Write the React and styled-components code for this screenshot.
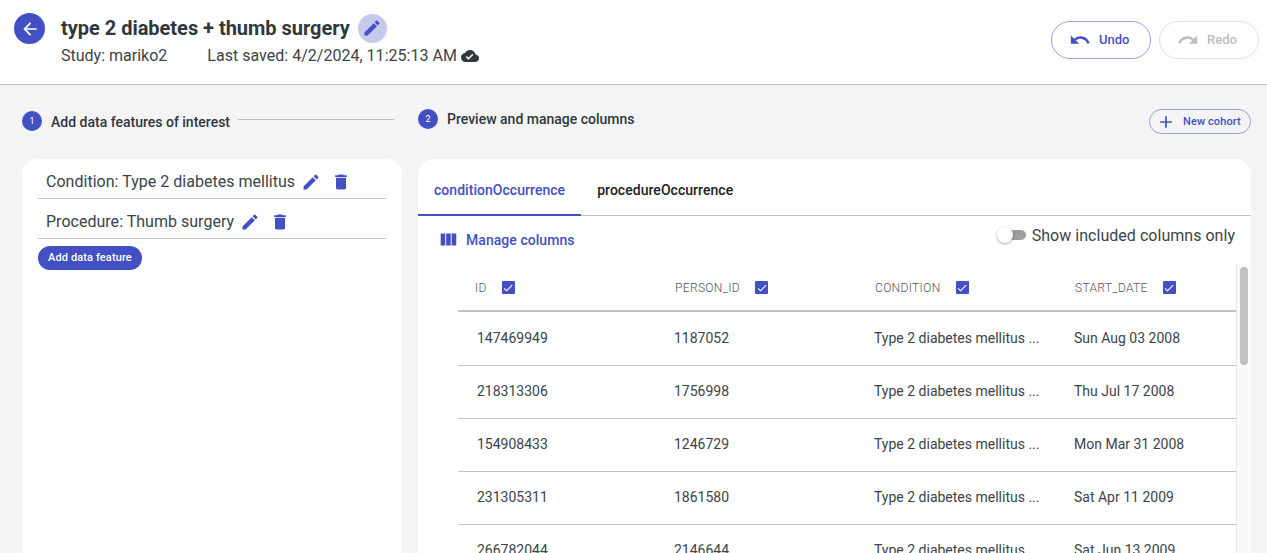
import React from "react";
import styled, { createGlobalStyle } from "styled-components";

const BLUE = "#4350c4";
const INK = "#2f383c";

const GlobalStyle = createGlobalStyle`
  html, body {
    margin: 0;
    height: 100%;
    overflow: hidden;
    background: #f4f4f4;
    font-family: Roboto, "Liberation Sans", sans-serif;
    color: ${INK};
  }
  * { box-sizing: border-box; }
`;

const icons = {
  back: "M20 11H7.83l5.59-5.59L12 4l-8 8 8 8 1.41-1.41L7.83 13H20v-2z",
  edit: "M3 17.25V21h3.75L17.81 9.94l-3.75-3.75L3 17.25zM20.71 7.04c.39-.39.39-1.02 0-1.41l-2.34-2.34a.9959.9959 0 0 0-1.41 0l-1.83 1.83 3.75 3.75 1.83-1.83z",
  trash: "M6 19c0 1.1.9 2 2 2h8c1.1 0 2-.9 2-2V7H6v12zM19 4h-3.5l-1-1h-5l-1 1H5v2h14V4z",
  undo: "M12.5 8c-2.65 0-5.05.99-6.9 2.6L2 7v9h9l-3.62-3.62c1.39-1.16 3.16-1.88 5.12-1.88 3.54 0 6.55 2.31 7.6 5.5l2.37-.78C21.08 11.03 17.15 8 12.5 8z",
  redo: "M18.4 10.6C16.55 8.99 14.15 8 11.5 8c-4.65 0-8.58 3.03-9.96 7.22L3.9 16c1.05-3.19 4.05-5.5 7.6-5.5 1.95 0 3.73.72 5.12 1.88L13 16h9V7l-3.6 3.6z",
  add: "M19 13h-6v6h-2v-6H5v-2h6V5h2v6h6v2z",
  columns: "M10 18h5V5h-5v13zm-6 0h5V5H4v13zM16 5v13h5V5h-5z",
  cloud: "M19.35 10.04C18.67 6.59 15.64 4 12 4 9.11 4 6.6 5.64 5.35 8.04 2.34 8.36 0 10.91 0 14c0 3.31 2.69 6 6 6h13c2.76 0 5-2.24 5-5 0-2.64-2.05-4.78-4.65-4.96zM10 17l-3.5-3.5 1.41-1.41L10 14.17 15.18 9l1.41 1.41L10 17z",
  check: "M9 16.17 4.83 12l-1.42 1.41L9 19 21 7l-1.41-1.41z",
};

const Icon = ({ name, size = 20, color = BLUE }) => (
  <svg width={size} height={size} viewBox="0 0 24 24" fill={color} style={{ flex: "none", display: "block" }}>
    <path d={icons[name]} />
  </svg>
);

const rows = [
  ["147469949", "1187052", "Type 2 diabetes mellitus ...", "Sun Aug 03 2008"],
  ["218313306", "1756998", "Type 2 diabetes mellitus ...", "Thu Jul 17 2008"],
  ["154908433", "1246729", "Type 2 diabetes mellitus ...", "Mon Mar 31 2008"],
  ["231305311", "1861580", "Type 2 diabetes mellitus ...", "Sat Apr 11 2009"],
  ["266782044", "2146644", "Type 2 diabetes mellitus ...", "Sat Jun 13 2009"],
];

const columns = ["ID", "PERSON_ID", "CONDITION", "START_DATE"];

const App = () => {
  return (
    <Page>
      <GlobalStyle />
      <Header>
        <BackButton>
          <Icon name="back" size={20} color="#fff" />
        </BackButton>
        <TitleBox>
          <TitleRow>
            <Title>type 2 diabetes + thumb surgery</Title>
            <EditCircle>
              <Icon name="edit" size={20} />
            </EditCircle>
          </TitleRow>
          <MetaRow>
            <span>Study: mariko2</span>
            <SavedText>
              Last saved: 4/2/2024, 11:25:13 AM
              <Icon name="cloud" size={18} color={INK} />
            </SavedText>
          </MetaRow>
        </TitleBox>
        <HeaderActions>
          <PillButton>
            <Icon name="undo" size={22} />
            Undo
          </PillButton>
          <PillButton disabled>
            <Icon name="redo" size={22} color="#bdbdbd" />
            Redo
          </PillButton>
        </HeaderActions>
      </Header>

      <Main>
        <LeftColumn>
          <LeftStep>
            <StepNumber>1</StepNumber>
            <StepLabel offset={1}>Add data features of interest</StepLabel>
            <StepLine />
          </LeftStep>
          <Panel>
            <FeatureList>
              <FeatureRow>
                Condition: Type 2 diabetes mellitus
                <Icon name="edit" size={20} />
                <TrashSlot>
                  <Icon name="trash" size={20} />
                </TrashSlot>
              </FeatureRow>
              <FeatureRow>
                Procedure: Thumb surgery
                <Icon name="edit" size={20} />
                <TrashSlot>
                  <Icon name="trash" size={20} />
                </TrashSlot>
              </FeatureRow>
              <AddButton>Add data feature</AddButton>
            </FeatureList>
          </Panel>
        </LeftColumn>

        <RightColumn>
          <RightStep>
            <StepNumber>2</StepNumber>
            <StepLabel offset={0}>Preview and manage columns</StepLabel>
            <NewCohort>
              <Icon name="add" size={20} />
              New cohort
            </NewCohort>
          </RightStep>
          <Panel>
            <Tabs>
              <Tab active>conditionOccurrence</Tab>
              <Tab>procedureOccurrence</Tab>
            </Tabs>
            <Toolbar>
              <ManageColumns>
                <Icon name="columns" size={22} />
                Manage columns
              </ManageColumns>
              <ToggleLabel>
                <Switch>
                  <SwitchThumb />
                </Switch>
                Show included columns only
              </ToggleLabel>
            </Toolbar>
            <TableArea>
              <Table>
                <HeadRow>
                  {columns.map((name) => (
                    <HeadCell key={name}>
                      {name}
                      <CheckBox>
                        <Icon name="check" size={12} color="#fff" />
                      </CheckBox>
                    </HeadCell>
                  ))}
                </HeadRow>
                <TableBody>
                  {rows.map((row) => (
                    <BodyRow key={row[0]}>
                      {row.map((value, i) => (
                        <BodyCell key={i} first={i === 0}>
                          {value}
                        </BodyCell>
                      ))}
                    </BodyRow>
                  ))}
                </TableBody>
              </Table>
              <ScrollTrack>
                <ScrollThumb />
              </ScrollTrack>
            </TableArea>
          </Panel>
        </RightColumn>
      </Main>
    </Page>
  );
};

export default App;

const Page = styled.div`
  height: 100vh;
  overflow: hidden;
  display: flex;
  flex-direction: column;
`;

const Header = styled.header`
  height: 85px;
  flex: none;
  display: flex;
  align-items: flex-start;
  background: #fff;
  border-bottom: 1px solid #bfc2c7;
  padding: 13px 8px 0 14px;
`;

const BackButton = styled.div`
  width: 31px;
  height: 31px;
  border-radius: 50%;
  background: ${BLUE};
  display: flex;
  align-items: center;
  justify-content: center;
`;

const TitleBox = styled.div`
  margin-left: 16px;
`;

const TitleRow = styled.div`
  display: flex;
  align-items: center;
  gap: 8px;
  height: 30px;
`;

const Title = styled.h1`
  margin: 0;
  font-size: 20px;
  font-weight: 700;
  line-height: 30px;
  letter-spacing: -0.02px;
  color: ${INK};
`;

const EditCircle = styled.div`
  width: 29px;
  height: 29px;
  border-radius: 50%;
  background: #c7caee;
  display: flex;
  align-items: center;
  justify-content: center;
`;

const MetaRow = styled.div`
  display: flex;
  gap: 40px;
  margin-top: 3px;
  font-size: 16px;
  line-height: 20px;
  color: #3b4448;
`;

const SavedText = styled.span`
  display: flex;
  align-items: center;
  gap: 4px;
  letter-spacing: 0.02px;
`;

const HeaderActions = styled.div`
  margin-left: auto;
  margin-top: 8px;
  display: flex;
  gap: 8px;
`;

const PillButton = styled.div`
  width: 100px;
  height: 38px;
  border-radius: 19px;
  border: 1px solid ${(p) => (p.disabled ? "#e0e0e0" : "#9aa2e3")};
  display: flex;
  align-items: center;
  gap: 8px;
  padding: 0 0 1px 17px;
  font-size: 13px;
  font-weight: 500;
  color: ${(p) => (p.disabled ? "#bdbdbd" : BLUE)};
`;

const Main = styled.main`
  flex: 1;
  display: flex;
  gap: 16px;
  padding: 0 16px 0 22px;
  min-height: 0;
`;

const LeftColumn = styled.section`
  width: 380px;
  flex: none;
  display: flex;
  flex-direction: column;
`;

const RightColumn = styled.section`
  flex: 1;
  min-width: 0;
  display: flex;
  flex-direction: column;
`;

const LeftStep = styled.div`
  height: 74px;
  flex: none;
  display: flex;
  align-items: flex-start;
  padding-top: 26px;
  padding-right: 8px;
`;

const RightStep = styled.div`
  height: 74px;
  flex: none;
  display: flex;
  align-items: flex-start;
  padding-top: 24px;
`;

const StepNumber = styled.div`
  width: 20px;
  height: 20px;
  flex: none;
  border-radius: 50%;
  background: ${BLUE};
  color: #fff;
  font-size: 9px;
  display: flex;
  align-items: center;
  justify-content: center;
`;

const StepLabel = styled.div`
  margin: ${(p) => p.offset}px 0 0 9px;
  font-size: 14px;
  font-weight: 500;
  line-height: 20px;
  white-space: nowrap;
  color: ${INK};
`;

const StepLine = styled.div`
  flex: 1;
  height: 1px;
  margin: 8px 0 0 8px;
  background: #bdbdbd;
`;

const NewCohort = styled.div`
  margin-left: auto;
  width: 102px;
  height: 25px;
  border-radius: 13px;
  border: 1px solid #9aa2e3;
  display: flex;
  align-items: center;
  gap: 7px;
  padding-left: 6px;
  font-size: 11px;
  font-weight: 500;
  letter-spacing: 0.1px;
  white-space: nowrap;
  color: ${BLUE};
`;

const Panel = styled.div`
  flex: 1;
  min-height: 0;
  background: #fff;
  border-radius: 16px 16px 0 0;
  overflow: hidden;
  display: flex;
  flex-direction: column;
`;

const FeatureList = styled.div`
  padding: 0 16px;
`;

const FeatureRow = styled.div`
  height: 40px;
  display: flex;
  align-items: center;
  gap: 6px;
  padding: 6px 0 0 8px;
  border-bottom: 1px solid #bfc2c7;
  font-size: 16px;
  letter-spacing: 0.02px;
  color: #3b4448;
`;

const TrashSlot = styled.span`
  margin-left: 4px;
`;

const AddButton = styled.div`
  display: inline-block;
  margin-top: 7px;
  height: 24px;
  padding: 0 10px;
  border-radius: 12px;
  background: ${BLUE};
  color: #fff;
  font-size: 11px;
  font-weight: 500;
  letter-spacing: 0.12px;
  line-height: 23px;
`;

const Tabs = styled.div`
  flex: none;
  height: 57px;
  display: flex;
  border-bottom: 1px solid #bfc2c7;
`;

const Tab = styled.div`
  height: 57px;
  padding: 6px 16px 0;
  display: flex;
  align-items: center;
  font-size: 14px;
  font-weight: 500;
  letter-spacing: 0.04px;
  color: ${(p) => (p.active ? BLUE : "#212121")};
  border-bottom: 2px solid ${(p) => (p.active ? BLUE : "transparent")};
`;

const Toolbar = styled.div`
  flex: none;
  height: 48px;
  display: flex;
  align-items: flex-start;
  justify-content: space-between;
  padding: 10px 16px 0 19px;
`;

const ManageColumns = styled.div`
  display: flex;
  align-items: center;
  gap: 7px;
  height: 28px;
  font-size: 14px;
  font-weight: 500;
  letter-spacing: 0.05px;
  color: ${BLUE};
`;

const ToggleLabel = styled.div`
  display: flex;
  align-items: center;
  gap: 6px;
  height: 20px;
  margin-top: -1px;
  font-size: 16px;
  letter-spacing: 0.03px;
  color: #3b4448;
`;

const Switch = styled.div`
  position: relative;
  width: 28px;
  height: 10px;
  border-radius: 5px;
  background: #9e9e9e;
`;

const SwitchThumb = styled.div`
  position: absolute;
  left: -1px;
  top: -3px;
  width: 16px;
  height: 16px;
  border-radius: 50%;
  background: #fff;
  box-shadow: 0 1px 3px rgba(0, 0, 0, 0.35);
`;

const TableArea = styled.div`
  flex: 1;
  min-height: 0;
  display: flex;
  padding-left: 40px;
`;

const Table = styled.div`
  flex: 1;
  min-width: 0;
`;

const HeadRow = styled.div`
  display: grid;
  grid-template-columns: repeat(4, 200px);
  height: 48px;
  border-bottom: 2px solid #bfc2c7;
`;

const HeadCell = styled.div`
  display: flex;
  align-items: flex-start;
  padding: 17px 0 0 17px;
  font-size: 12px;
  font-weight: 300;
  line-height: 15px;
  letter-spacing: 0.35px;
  color: #50565a;
  white-space: nowrap;
`;

const CheckBox = styled.span`
  width: 13px;
  height: 13px;
  margin-left: 15px;
  border-radius: 1px;
  background: ${BLUE};
  display: flex;
  align-items: center;
  justify-content: center;
`;

const TableBody = styled.div`
  padding-top: 1px;
`;

const BodyRow = styled.div`
  display: grid;
  grid-template-columns: repeat(4, 200px);
  height: 53px;
  padding-bottom: 2px;
  border-bottom: 1px solid #bfc2c7;
  align-items: center;
`;

const BodyCell = styled.div`
  padding-left: ${(p) => (p.first ? "19px" : "16px")};
  font-size: 14px;
  color: #3b4448;
  white-space: nowrap;
`;

const ScrollTrack = styled.div`
  width: 15px;
  flex: none;
  background: #fafafa;
  border-left: 1px solid #e8e8e8;
  padding: 3px 3px 0 3px;
`;

const ScrollThumb = styled.div`
  height: 98px;
  border-radius: 4px;
  background: #c1c1c1;
`;
